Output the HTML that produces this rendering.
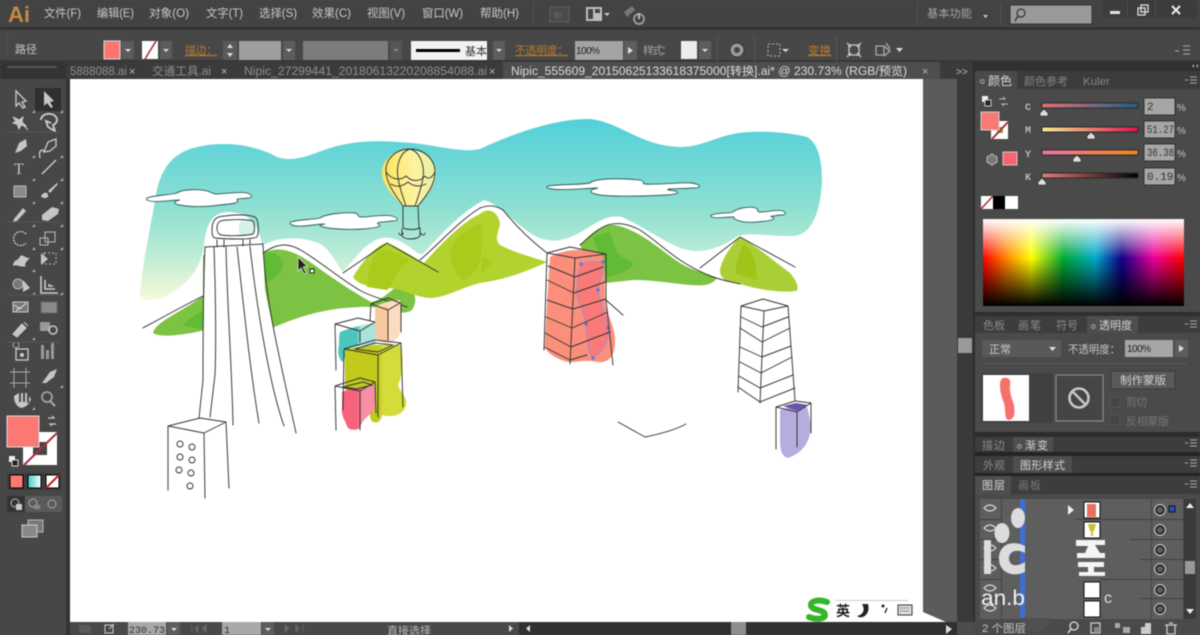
<!DOCTYPE html>
<html><head><meta charset="utf-8"><title>Illustrator</title>
<style>
html,body{margin:0;padding:0;background:#484848;width:1200px;height:635px;overflow:hidden}
svg{display:block;filter:blur(.45px)}
text{font-family:"Liberation Sans","Noto Sans CJK SC",sans-serif;font-size:11px;fill:#c4c4c4}
.m{font-size:11.5px;fill:#c8c8c8}
.o{fill:#b97a2c;font-size:11px;text-decoration:underline}
.d{fill:#8a8a8a}
.s{font-family:"Liberation Mono","Noto Sans CJK SC",monospace;font-size:11px;fill:#333}
.b{fill:none;stroke:#333;stroke-width:.95;stroke-linejoin:round;stroke-linecap:round}
.i{fill:#c6c6c6}
.c{fill:#fff;stroke:#2f5a58;stroke-width:.9}
</style></head><body>
<svg width="1200" height="635" viewBox="0 0 1200 635" xmlns="http://www.w3.org/2000/svg">
<defs>
<linearGradient id="sky" x1="0" y1="0" x2="0" y2="1"><stop offset="0" stop-color="#52d0da"/><stop offset=".5" stop-color="#8fe0d2"/><stop offset=".75" stop-color="#bdecd6"/><stop offset="1" stop-color="#f8fad8"/></linearGradient>
<linearGradient id="hue" x1="0" y1="0" x2="1" y2="0"><stop offset="0" stop-color="#f00"/><stop offset=".12" stop-color="#f80"/><stop offset=".24" stop-color="#ff0"/><stop offset=".4" stop-color="#0a3"/><stop offset=".56" stop-color="#0ac"/><stop offset=".69" stop-color="#108"/><stop offset=".85" stop-color="#e09"/><stop offset="1" stop-color="#f00"/></linearGradient>
<linearGradient id="wh" x1="0" y1="0" x2="0" y2="1"><stop offset="0" stop-color="#fff"/><stop offset=".45" stop-color="#fff" stop-opacity="0"/></linearGradient>
<linearGradient id="bk" x1="0" y1="0" x2="0" y2="1"><stop offset=".45" stop-color="#000" stop-opacity="0"/><stop offset="1" stop-color="#000"/></linearGradient>
<linearGradient id="tg" x1="0" y1="0" x2="1" y2="0"><stop offset="0" stop-color="#3fcfc5"/><stop offset="1" stop-color="#fff"/></linearGradient>
<linearGradient id="c1" x1="0" y1="0" x2="1" y2="0"><stop offset="0" stop-color="#e56f70"/><stop offset="1" stop-color="#1e5f8c"/></linearGradient>
<linearGradient id="c2" x1="0" y1="0" x2="1" y2="0"><stop offset="0" stop-color="#f4ef90"/><stop offset="1" stop-color="#e0104f"/></linearGradient>
<linearGradient id="c3" x1="0" y1="0" x2="1" y2="0"><stop offset="0" stop-color="#ee70b0"/><stop offset="1" stop-color="#ee8a10"/></linearGradient>
<linearGradient id="c4" x1="0" y1="0" x2="1" y2="0"><stop offset="0" stop-color="#e87a76"/><stop offset="1" stop-color="#000"/></linearGradient>
<linearGradient id="bal" x1="0" y1="0" x2="1" y2="0"><stop offset="0" stop-color="#fbe35c"/><stop offset=".6" stop-color="#fdf3a0"/><stop offset="1" stop-color="#e8f0a8"/></linearGradient>
<linearGradient id="pk" x1="0" y1="0" x2="1" y2="0"><stop offset=".45" stop-color="#f7637d"/><stop offset=".6" stop-color="#f78fa5"/></linearGradient>
<linearGradient id="yl" x1="0" y1="0" x2="1" y2="0"><stop offset=".55" stop-color="#c2ca1a"/><stop offset=".62" stop-color="#d4dc3c"/></linearGradient>
<linearGradient id="te" x1="0" y1="0" x2="1" y2="0"><stop offset=".5" stop-color="#4cc6bb"/><stop offset=".6" stop-color="#a8e4dc"/></linearGradient>
</defs>

<!-- base -->
<rect width="1200" height="635" fill="#484848"/>
<rect width="1200" height="27" fill="#434343"/>
<rect y="27" width="1200" height="3" fill="#333"/>
<rect y="30" width="1200" height="32" fill="#474747"/>
<rect y="60" width="1200" height="3" fill="#383838"/>
<rect y="62" width="975" height="17" fill="#3b3b3b"/>
<rect x="503" y="62" width="437" height="17" fill="#4e4e4e"/>
<rect x="0" y="62" width="66" height="17" fill="#333"/>
<rect x="0" y="79" width="66" height="556" fill="#474747"/>
<rect x="66" y="79" width="4" height="556" fill="#333"/>

<!-- menubar -->
<text x="8" y="22" style="font-size:22px;font-weight:bold;fill:#c58b3f">Ai</text>
<text class="m" x="44" y="17" textLength="37" lengthAdjust="spacingAndGlyphs">文件(F)</text>
<text class="m" x="97" y="17" textLength="37" lengthAdjust="spacingAndGlyphs">编辑(E)</text>
<text class="m" x="149" y="17" textLength="40" lengthAdjust="spacingAndGlyphs">对象(O)</text>
<text class="m" x="206" y="17" textLength="37" lengthAdjust="spacingAndGlyphs">文字(T)</text>
<text class="m" x="259" y="17" textLength="38" lengthAdjust="spacingAndGlyphs">选择(S)</text>
<text class="m" x="312" y="17" textLength="39" lengthAdjust="spacingAndGlyphs">效果(C)</text>
<text class="m" x="367" y="17" textLength="38" lengthAdjust="spacingAndGlyphs">视图(V)</text>
<text class="m" x="422" y="17" textLength="41" lengthAdjust="spacingAndGlyphs">窗口(W)</text>
<text class="m" x="480" y="17" textLength="39" lengthAdjust="spacingAndGlyphs">帮助(H)</text>
<rect x="533" y="3" width="1" height="21" fill="#555"/>
<rect x="550" y="7" width="19" height="15" fill="#4a4a4a" stroke="#5e5e5e"/>
<text x="554" y="18" style="font-size:8px;fill:#6e6e6e">Br</text>
<rect x="586" y="7" width="16" height="14" fill="#bdbdbd"/><rect x="588" y="9" width="5" height="10" fill="#444"/><rect x="595" y="9" width="5" height="4" fill="#444"/>
<path d="M604 13h6l-3 3z" fill="#ccc"/>
<path d="M624 12l8-6 3 4-8 7z" fill="#777"/>
<circle cx="639" cy="19" r="5" fill="none" stroke="#aaa" stroke-width="1.5"/><rect x="638" y="13" width="2" height="6" fill="#bbb"/>
<rect x="917" y="3" width="1" height="23" fill="#555"/>
<text class="d" x="927" y="17" textLength="45" lengthAdjust="spacingAndGlyphs" style="fill:#a6a6a6">基本功能</text>
<path d="M983 15h5l-2.500 3z" fill="#ccc"/>
<rect x="1000" y="3" width="1" height="23" fill="#555"/>
<rect x="1010" y="5" width="82" height="19" fill="#999" stroke="#333"/>
<circle cx="1021" cy="13" r="4" fill="none" stroke="#333" stroke-width="1.2"/><path d="M1018 16l-3 5" stroke="#333" stroke-width="1.4"/>
<rect x="1102" y="0" width="95" height="18" rx="2" fill="#3c3c3c"/>
<rect x="1127" y="0" width="1" height="18" fill="#4c4c4c"/><rect x="1155" y="0" width="1" height="18" fill="#4c4c4c"/>
<rect x="1110" y="11" width="10" height="3" fill="#e4e4e4"/>
<rect x="1138" y="8" width="7" height="7" fill="none" stroke="#ddd" stroke-width="1.3"/><rect x="1141" y="5" width="7" height="7" fill="none" stroke="#ddd" stroke-width="1.3"/>
<path d="M1172 6l8 8M1180 6l-8 8" stroke="#eee" stroke-width="2"/>

<!-- control bar -->
<path d="M7 34v24" stroke="#666" stroke-dasharray="1 2"/>
<text x="15" y="53" textLength="22" style="fill:#c6c6c6">路径</text>
<rect x="104" y="41" width="16" height="18" fill="#fb7670" stroke="#ddd"/>
<rect x="121" y="41" width="13" height="18" fill="#5b5b5b"/><path d="M125 49h6l-3 3z" fill="#ddd"/>
<rect x="142" y="41" width="16" height="18" fill="#fff"/><path d="M145 59l11-18" stroke="#a8303a" stroke-width="1.600"/>
<rect x="160" y="41" width="12" height="18" fill="#5b5b5b"/><path d="M163 49h6l-3 3z" fill="#ddd"/>
<text class="o" x="185" y="54" textLength="32" lengthAdjust="spacingAndGlyphs">描边：</text>
<rect x="223" y="41" width="14" height="19" fill="#5a5a5a"/><path d="M227 48l3-4 3 4zM227 53l3 4 3-4z" fill="#ddd"/>
<rect x="239" y="41" width="42" height="19" fill="#9e9e9e"/>
<rect x="283" y="41" width="12" height="19" fill="#5d5d5d"/><path d="M286 49h6l-3 3z" fill="#ddd"/>
<rect x="303" y="41" width="85" height="19" fill="#7c7c7c"/>
<rect x="390" y="41" width="12" height="19" fill="#555"/><path d="M393 49h6l-3 3z" fill="#888"/>
<rect x="411" y="41" width="76" height="19" fill="#f2f2f2"/>
<rect x="416" y="49" width="44" height="3" fill="#000"/>
<text x="465" y="55" textLength="22" style="fill:#333">基本</text>
<rect x="493" y="41" width="12" height="19" fill="#5d5d5d"/><path d="M496 49h6l-3 3z" fill="#ddd"/>
<text class="o" x="515" y="54" textLength="53" lengthAdjust="spacingAndGlyphs">不透明度：</text>
<rect x="575" y="41" width="48" height="19" fill="#a4a4a4"/>
<text x="576" y="54" textLength="24" style="fill:#222;font-size:10px">100%</text>
<rect x="624" y="41" width="13" height="19" fill="#5d5d5d"/><path d="M628 47l5 3.500-5 3.500z" fill="#ddd"/>
<text x="643" y="54" textLength="29" style="fill:#a6a6a6">样式：</text>
<rect x="681" y="41" width="16" height="18" fill="#ececec"/>
<rect x="699" y="41" width="12" height="18" fill="#5d5d5d"/><path d="M702 49h6l-3 3z" fill="#ddd"/>
<rect x="717" y="36" width="1" height="26" fill="#555"/>
<circle cx="737" cy="50" r="7" fill="#999" stroke="#333"/><circle cx="737" cy="50" r="3" fill="#444"/>
<rect x="754" y="36" width="1" height="26" fill="#555"/>
<rect x="768" y="44" width="12" height="12" fill="none" stroke="#bbb" stroke-dasharray="2 2"/><path d="M782 49h7l-3.500 3z" fill="#ddd"/>
<text x="808" y="54" textLength="23" lengthAdjust="spacingAndGlyphs" style="fill:#c47a30;text-decoration:underline">变换</text>
<rect x="836" y="36" width="1" height="26" fill="#555"/>
<path d="M849 45h10v10h-10zM847 43l4 4M861 43l-4 4M847 57l4-4M861 57l-4-4" fill="none" stroke="#ccc" stroke-width="1.300"/>
<path d="M876 46h8v9h-8zM884 46l6 5-6 5M886 43l4 6" fill="none" stroke="#aaa" stroke-width="1.300"/><path d="M896 48h7l-3.500 4z" fill="#ddd"/>
<path d="M1175 51h4M1183 46h7M1183 50h7M1183 54h7" stroke="#aaa"/>

<!-- tabs -->
<text x="70" y="75" textLength="57" lengthAdjust="spacingAndGlyphs" style="fill:#8f8f8f;font-size:11.500px">5888088.ai</text><text x="129" y="75" style="fill:#bbb">×</text>
<text x="152" y="75" textLength="59" lengthAdjust="spacingAndGlyphs" style="fill:#8f8f8f;font-size:11.500px">交通工具.ai</text><text x="221" y="75" style="fill:#bbb">×</text>
<text x="244" y="75" textLength="243" lengthAdjust="spacingAndGlyphs" style="fill:#8f8f8f;font-size:11.500px">Nipic_27299441_20180613220208854088.ai</text><text x="489" y="75" style="fill:#bbb">×</text>
<text x="511" y="75" textLength="396" lengthAdjust="spacingAndGlyphs" style="fill:#dcdcdc;font-size:11.500px">Nipic_555609_20150625133618375000[转换].ai* @ 230.73% (RGB/预览)</text><text x="922" y="75" style="fill:#bbb">×</text>
<text x="956" y="75" style="fill:#bbb;font-size:10px">&gt;&gt;</text>

<!-- pasteboard -->
<rect x="70" y="79" width="887" height="543" fill="#5b5b5b"/>
<rect x="957" y="79" width="16" height="543" fill="#3a3a3a"/>
<rect x="958" y="338" width="14" height="15" fill="#999"/>
<rect x="973" y="62" width="2" height="573" fill="#2e2e2e"/>

<!-- artboard -->
<path d="M70 79H923V612L946 622H70Z" fill="#fff"/>

<!-- sky -->
<path fill="url(#sky)" d="M140 295C142 265 150 230 156 195C160 170 172 155 190 149C215 141 250 142 277 157C295 163 312 154 330 148C360 139 385 141 413 143C440 146 462 153 480 149C510 135 555 118 590 119C620 122 640 146 680 147C705 147 720 133 750 132C775 131 795 134 807 137C818 143 822 160 822 180C821 205 815 233 795 236C775 237 750 232 738 236C725 245 710 252 693 251C675 250 650 230 622 217C605 213 590 228 577 234C560 243 545 243 530 233C515 223 500 205 484 200C462 212 445 230 423 254C418 256 410 245 397 240C385 235 375 238 362 250L343 272C335 262 330 248 318 243C300 236 280 237 265 244L262 244C258 225 250 212 228 212C212 212 206 225 204 245C200 270 190 282 165 297C155 301 140 302 140 295Z"/>
<rect x="239" y="221" width="15" height="14" rx="4" fill="#d5f1ea"/>

<!-- mountains -->
<path fill="#7cc243" d="M153 333C155 322 180 313 203 296L203 255L263 253C280 245 295 252 310 262C335 280 350 290 371 302C385 300 395 285 403 283C412 288 420 297 412 310C400 318 385 305 360 307C320 308 290 320 270 329L263 300L205 330C185 335 160 338 153 333Z"/>
<path fill="#62bb34" d="M263 253L273 253C280 256 284 262 283 266C280 274 272 280 265 283ZM183 325C190 318 197 314 203 310V330C195 328 188 327 183 325Z"/>
<path fill="#b2d22e" d="M353 277C360 265 375 245 387 243C398 247 410 255 424 263C440 245 462 222 480 214C490 205 500 215 500 225C497 235 495 240 500 245C515 253 535 258 547 262C530 270 505 280 480 283C460 288 445 298 430 298C415 297 405 290 390 288C372 288 358 285 353 277Z"/>
<path fill="#a8cb1c" d="M367 287C368 270 372 258 377 253C382 248 386 250 390 251C398 254 405 257 410 260C404 265 400 268 397 273C392 282 390 288 387 290ZM450 253C452 243 458 236 463 233C470 228 475 225 480 223C484 232 482 250 480 260C478 270 470 278 463 280C455 275 450 262 450 253ZM482 258C486 258 490 260 493 262C490 266 485 270 481 273Z"/>
<path fill="#7cc243" d="M580 245C590 235 600 224 615 225C640 230 660 250 680 263C695 272 710 274 717 278C712 285 705 286 690 285C670 283 650 280 637 280C625 280 615 283 600 283Z"/>
<path fill="#62bb34" d="M593 237C600 234 606 232 610 233C613 240 614 248 617 253C622 258 630 260 633 263C632 268 625 272 620 273C615 275 610 276 607 277Z"/>
<path fill="#aacf36" d="M720 270C722 258 733 243 740 237C755 245 770 258 790 273C796 280 800 288 796 291C780 293 760 290 740 284C728 282 720 280 720 270Z"/>
<path fill="#a0c418" d="M735 273C737 262 740 250 743 245C747 246 750 250 752 253C755 262 757 272 757 280C750 278 742 276 735 273Z"/>

<!-- tower -->
<path fill="#fff" d="M205 247L263 244L265 290L277 347L296 433L233 426L199 418L203 357Z"/>
<path class="b" d="M143 328C165 316 185 305 203 296M263 253C272 247 278 245 285 245C295 245 305 252 330 270C345 281 355 288 363 292C378 299 392 302 407 307"/>
<path class="b" d="M343 273L387 243L438 272M420 260C440 243 460 220 480 208C490 204 497 206 503 210C515 225 530 240 547 253"/>
<path class="b" d="M580 245C590 236 597 230 603 227C612 222 625 222 640 230C655 240 665 250 680 260C695 270 705 274 713 277C725 281 732 282 740 284M700 268L740 237L795 267"/>
<path class="b" d="M212 230C212 220 216 216 225 216C238 214 250 215 255 217C259 220 259 232 257 237C250 240 225 239 215 238C212 237 212 234 212 230Z"/>
<path class="b" d="M217 228C217 222 220 220 228 220C240 219 250 220 253 221C255 225 255 232 253 234C245 236 228 236 221 235C218 234 217 232 217 228Z"/>
<path class="b" d="M217 240V247M224 240V247M243 240V246M250 240V246M205 247L263 244"/>
<path class="b" d="M205 247C203 290 203 340 203 380L199 418M214 247C216 300 216 350 215 375L210 417M226 247C227 300 232 370 233 425M237 247C243 300 250 370 259 423M250 247C256 300 268 380 284 426M263 244C265 300 280 360 296 433"/>
<!-- small building -->
<path class="b" d="M168 426L200 418L226 422L204 433ZM168 426V490M204 433L205 498M226 422L229 488"/>
<g class="b"><circle cx="180" cy="444" r="3"/><circle cx="192" cy="447" r="3"/><circle cx="180" cy="457" r="3"/><circle cx="192" cy="460" r="3"/><circle cx="179" cy="470" r="3"/><circle cx="191" cy="473" r="3"/><circle cx="190" cy="486" r="3"/></g>

<!-- clouds -->
<path class="c" d="M147 198C155 195 170 195 177 193C182 189 200 189 207 191C212 192 212 194 216 194C225 194 240 191 247 193C253 195 253 198 248 198C243 199 236 198 237 200C240 203 232 204 220 205C205 207 190 207 180 205C172 204 174 201 180 200C170 200 158 203 150 201C146 200 146 199 147 198Z"/>
<path class="c" d="M291 222C300 219 312 220 320 218C325 214 345 212 355 213C360 214 356 217 362 217C370 217 385 214 392 216C399 218 399 221 392 221C385 222 375 222 378 224C384 226 376 228 363 229C350 230 335 229 328 228C318 226 318 225 325 224C315 224 305 227 296 226C290 225 289 223 291 222Z"/>
<path class="c" d="M548 186C560 184 580 185 590 183C595 178 620 178 640 180C647 182 640 184 646 184C660 185 680 182 692 183C702 185 702 188 692 188C683 189 665 188 668 190C680 191 682 194 667 195C650 196 615 197 600 195C588 193 588 190 598 188C585 188 565 191 552 189C546 188 546 187 548 186Z"/>
<path class="c" d="M712 215C718 212 728 214 733 212C737 208 750 206 756 208C760 210 755 212 761 212C768 212 778 209 783 211C787 213 786 215 780 215C775 216 768 216 772 217C778 219 770 221 757 222C745 223 738 221 735 219C732 218 736 217 733 217C725 217 716 219 712 217C710 216 711 215 712 215Z"/>

<!-- balloon -->
<path fill="url(#bal)" d="M408 150C392 150 381 162 382 174C383 188 398 200 403 206H418C425 198 436 186 436 172C436 160 424 150 408 150Z"/>
<g class="b">
<path d="M410 149C395 149 385 160 386 172C387 186 398 198 403 206H418C425 197 435 186 435 172C435 160 425 149 410 149Z"/>
<path d="M410 149C400 152 396 165 398 178C400 190 404 200 406 206M410 149C420 152 425 165 423 178C421 190 417 200 415 206"/>
<path d="M386 172C392 180 400 181 406 176C412 182 420 182 425 176C428 180 432 178 435 172M391 184C397 188 403 186 408 182C414 187 420 187 426 184"/>
<path d="M403 206L403 228M418 206L419 228M403 206H418M403 228C408 230 415 230 420 228M402 229V236C405 240 416 240 420 236V228M399 233A2 2 0 1 0 403 233M421 233A2 2 0 1 0 425 233"/>
</g>

<!-- coloured cluster -->
<path fill="#fcdcc0" d="M375 307C382 303 392 300 400 300C402 312 402 328 399 336C394 342 390 344 386 343C381 342 377 340 375 337Z"/>
<path fill="#f8c8a0" d="M375 307L388 306V342C381 342 377 340 375 337Z"/>
<path fill="url(#te)" d="M340 332C350 328 365 324 375 323C376 332 376 340 375 345C365 345 355 346 350 348C347 352 345 358 343 362C339 360 337 352 339 345C339 340 339 336 340 332Z"/>
<path fill="url(#yl)" d="M345 350C360 345 390 344 400 345C404 355 403 375 398 385C400 392 408 398 406 405C404 415 392 418 382 415C382 420 378 424 373 422C368 418 372 413 368 410C355 408 345 395 345 385Z"/>
<path fill="url(#pk)" d="M342 392C352 388 365 386 375 385C376 395 376 405 373 412C368 416 362 420 360 428C355 431 348 430 347 426C345 420 341 416 342 408Z"/>
<g class="b">
<path d="M371 304L388 298L400 303L388 310ZM371 304L370 320M388 310V340M401 303V332"/>
<path d="M335 324L358 318L375 322L360 331ZM335 324L336 370M360 331V342"/>
<path d="M344 349L375 340L401 343L378 355ZM355 349L375 343L393 345L378 352ZM344 349L343 410M378 355V417M401 343L403 407"/>
<path d="M335 386L360 378L375 382L360 391ZM343 387L363 382L372 385L357 389ZM335 386L336 430M360 391V430M375 382L376 413"/>
</g>

<!-- red building -->
<path fill="#fb8f7c" d="M550 257C560 250 590 246 603 255C606 275 604 295 606 307C610 320 618 335 614 350C612 360 605 363 597 362C585 359 575 363 568 362C560 360 548 355 545 347C546 320 548 285 550 257Z"/>
<path fill="#fa7a78" stroke="#8d8fe0" stroke-width=".8" d="M581 264C590 260 597 262 603 262C604 272 599 282 598 290C600 302 606 315 608 328C609 338 606 350 593 358C588 354 588 345 586 324C583 310 578 300 577 295C577 284 578 272 581 264Z"/>
<g fill="#6a70d8"><circle cx="581" cy="264" r="1.700"/><circle cx="603" cy="262" r="1.700"/><circle cx="598" cy="290" r="1.700"/><circle cx="608" cy="328" r="1.700"/><circle cx="593" cy="358" r="1.700"/><circle cx="586" cy="324" r="1.700"/></g>
<g class="b">
<path d="M547 253L570 247L606 254L575 258ZM547 253L544 350M575 258L570 364M606 254V300L613 365M606 300L623 315M544 347L570 360L587 355"/>
<path d="M548 266L575 277L603 267M547 280L574 293L605 282M547 300L573 309L606 299M546 317L572 328L608 312M545 333L571 347L610 332"/>
</g>

<!-- grey building -->
<g class="b">
<path d="M741 306L763 299L788 306L764 311ZM741 306L738 392M764 311L760 403M788 306L795 400"/>
<path d="M741 317L762 327L788 317M740 328L762 342L790 328M740 347L762 357L791 346M740 362L761 373L792 357M739 376L760 388L793 375M738 387L760 402L795 388"/>
<path d="M618 422L645 437C660 434 675 430 686 424"/>
</g>
<!-- purple -->
<path fill="#b6acde" d="M780 410C790 407 800 406 807 407C811 420 812 432 808 440C804 450 795 456 787 458C781 455 780 448 780 440Z"/>
<path fill="#6a55a8" d="M783 406L796 403L808 405L797 411Z"/>
<path class="b" d="M776 407L795 401L811 403L797 412ZM776 407L776 449M797 412V447M811 403V433"/>

<!-- cursor -->
<path d="M298 257L298 271L301 268L304 274L306 273L303 267L307 266Z" fill="#222" stroke="#fff" stroke-width=".6"/>
<rect x="310" y="269" width="4" height="4" fill="#fff" stroke="#222"/>

<!-- IME -->
<rect x="835" y="600" width="73" height="1" fill="#ccc"/>
<path d="M827 602C818 599 811 601 811 605C811 611 825 609 825 615C825 619 816 620 809 617" fill="none" stroke="#35b52a" stroke-width="6" stroke-linecap="round"/>
<text x="836" y="616" style="font-size:14px;font-weight:bold;fill:#222">英</text>
<path d="M862 604C866 611 862 615 857 616C861 620 871 615 868 604Z" fill="#222"/>
<circle cx="883" cy="606" r="1.500" fill="#222"/><path d="M887 608L885 613" stroke="#222" stroke-width="1.300"/>
<rect x="898" y="605" width="14" height="10" fill="#ddd" stroke="#334"/><path d="M900 608h10M900 611h10" stroke="#445" stroke-dasharray="1 1"/>

<!-- status bar -->
<rect x="70" y="622" width="905" height="13" fill="#494949"/>
<rect x="79" y="625" width="12" height="8" rx="1" fill="#5a5a5a"/>
<path d="M105 625h8v8h-8zM109 629l5-5" fill="none" stroke="#ccc"/>
<rect x="128" y="622" width="38" height="13" fill="#a8a8a8"/><text class="s" x="129" y="633" textLength="36" lengthAdjust="spacingAndGlyphs" style="font-size:10px">230.73</text>
<rect x="167" y="622" width="13" height="13" fill="#5d5d5d"/><path d="M171 628h6l-3 3z" fill="#ddd"/>
<path d="M192 625v7M195 628.500l3-3v7zM206 625l-4 3.500 4 3.500z" fill="#666" stroke="#666"/>
<rect x="222" y="622" width="39" height="13" fill="#a8a8a8"/><text class="s" x="224" y="633" style="font-size:10px">1</text>
<rect x="262" y="622" width="12" height="13" fill="#5d5d5d"/><path d="M265 628h6l-3 3z" fill="#ddd"/>
<path d="M285 625l4 3.500-4 3.500zM296 625l3 3.500-3 3.500zM303 625v7" fill="#666" stroke="#666"/>
<text x="387" y="634" textLength="44" lengthAdjust="spacingAndGlyphs" style="fill:#bbb;font-size:10.500px">直接选择</text>
<path d="M509 625l4 3.500-4 3.500z" fill="#ddd"/>
<rect x="519" y="622" width="438" height="13" fill="#303030"/>
<path d="M530 625l-4 3.500 4 3.500z" fill="#ddd"/>
<rect x="731" y="622" width="15" height="13" fill="#8e8e8e"/>
<path d="M946 625l6 4-6 5z" fill="#ddd"/>
<rect x="957" y="622" width="16" height="13" fill="#4c4c4c"/>

<!-- toolbar -->
<rect x="7" y="66" width="50" height="2" fill="#555"/>
<rect x="35" y="88" width="26" height="23" fill="#2f2f2f"/>
<g class="i">
<path d="M16 91L16 106L19 103L23 108L25 107L22 102L26 101Z" fill="none" stroke="#ccc" stroke-width="1.300"/>
<path d="M44 91L44 106L47 103L51 108L53 107L50 102L54 101Z"/>
<path d="M13 117l6 3 4-3-1 5 4 4-5-1-2 4-2-5-4-1 3-2zM22 124l6 6" stroke="#ccc"/>
<path d="M41 120a8 6 0 1 1 12 5l2 6-7-4-2-6 5 2" fill="none" stroke="#ccc" stroke-width="1.800"/>
<path d="M15 153L19 143L26 139L27 146L21 151Z"/>
<path d="M44 152L48 142L56 139L56 146L50 151ZM40 158C38 150 43 148 44 152" fill="none" stroke="#ccc" stroke-width="1.300"/>
<text x="14" y="174" style="font-family:'Liberation Serif',serif;font-size:16px;fill:#c6c6c6">T</text>
<path d="M42 174L56 160" stroke="#ccc" stroke-width="1.400"/>
<rect x="14" y="186" width="12" height="11" fill="#8a8a8a" stroke="#bbb"/>
<path d="M41 196C45 190 49 193 48 197C45 199 42 198 41 196ZM48 191L57 183L58 184L50 193Z"/>
<path d="M14 219L23 208L26 211L17 221L13 222Z"/>
<path d="M42 215L52 207L59 209L58 214L48 221L42 220Z"/>
<path d="M26 234A7 7 0 1 0 26 243" fill="none" stroke="#ccc" stroke-width="1.300" stroke-dasharray="2 1"/>
<path d="M40 238h8v7h-8zM45 232h10v10h-10z" fill="none" stroke="#bbb"/>
<path d="M13 266C14 258 18 262 20 256C24 254 24 258 30 258C26 262 24 264 26 266C20 268 18 264 13 266Z"/>
<path d="M41 253L48 259L41 265Z"/><rect x="44" y="253" width="12" height="11" fill="none" stroke="#bbb" stroke-dasharray="2 2"/>
<circle cx="18" cy="284" r="5" fill="#777" stroke="#bbb"/><path d="M23 280L23 292L30 288Z"/>
<path d="M41 276V293H58M45 280V289H55M49 284V286H53" fill="none" stroke="#ccc" stroke-width="1.600"/>
<rect x="13" y="302" width="15" height="10" fill="#777" stroke="#ccc"/><path d="M14 305l6 4 6-6M16 311l4-4" stroke="#ddd" fill="none"/>
<rect x="41" y="302" width="16" height="11" fill="#8a8a8a" stroke="#666"/>
<path d="M13 334L22 324L26 328L17 337ZM24 322L28 326" stroke="#ccc"/>
<rect x="40" y="322" width="10" height="9" fill="#999"/><circle cx="53" cy="330" r="4" fill="none" stroke="#ccc" stroke-width="1.400"/>
<circle cx="16" cy="345" r="3" fill="none" stroke="#aaa"/><rect x="16" y="349" width="12" height="11" fill="none" stroke="#ccc" stroke-width="1.300"/><circle cx="22" cy="355" r="2" fill="#ccc"/>
<rect x="41" y="345" width="3" height="14" fill="#999"/><rect x="46" y="350" width="3" height="9" fill="#999"/><rect x="51" y="343" width="3" height="16" fill="#999"/>
<path d="M14 372h12v11h-12zM10 372h20M10 383h20M14 368v20M26 368v20" fill="none" stroke="#aaa"/>
<path d="M42 383L50 372L57 369L54 377L46 383Z"/>
<path d="M14 396L19 393V402H21V393H23V402H25V393H27V403H29V396L31 399C29 405 26 407 21 408C16 406 14 402 14 396Z"/>
<circle cx="47" cy="397" r="5" fill="none" stroke="#aaa" stroke-width="1.600"/><path d="M50 401L55 406" stroke="#aaa" stroke-width="2"/>
</g>
<g fill="#bbb"><path d="M32 113l3-3v3zM60 113l3-3v3zM32 158l3-3v3zM60 158l3-3v3zM32 181l3-3v3zM60 181l3-3v3zM32 204l3-3v3zM60 204l3-3v3zM32 227l3-3v3zM60 227l3-3v3zM32 250l3-3v3zM60 250l3-3v3zM32 272l3-3v3zM32 295l3-3v3zM60 295l3-3v3zM32 340l3-3v3zM60 388l3-3v3zM32 410l3-3v3z"/></g>
<g stroke="#555"><path d="M6 132h54M6 222h54M6 295h54M6 342h54"/></g>

<!-- fill / stroke -->
<rect x="23" y="432" width="34" height="33" fill="#fff"/>
<rect x="33" y="442" width="14" height="13" fill="#444"/>
<path d="M24 465L57 433" stroke="#a8303a" stroke-width="2"/>
<rect x="7" y="416" width="32" height="31" fill="#fb7875" stroke="#ddd"/>
<path d="M48 418l6 0-2-2M56 424l-6 0 2 2" fill="none" stroke="#ccc" stroke-width="1.200"/>
<rect x="9" y="456" width="6" height="6" fill="#eee"/><rect x="12" y="460" width="6" height="6" fill="#222" stroke="#ddd"/>
<rect x="7" y="473" width="54" height="17" fill="#3c3c3c"/>
<rect x="10" y="475" width="13" height="13" fill="#fb7875" stroke="#000"/>
<rect x="28" y="475" width="13" height="13" fill="url(#tg)" stroke="#000"/>
<rect x="46" y="475" width="13" height="13" fill="#fff" stroke="#000"/><path d="M46 488L59 475" stroke="#c4202a" stroke-width="2"/>
<rect x="7" y="496" width="18" height="16" fill="#333"/><rect x="25" y="496" width="18" height="16" fill="#5a5a5a"/><rect x="43" y="496" width="19" height="16" fill="#5a5a5a"/>
<circle cx="15" cy="503" r="4" fill="none" stroke="#bbb"/><rect x="16" y="504" width="6" height="6" fill="#ccc"/>
<circle cx="33" cy="503" r="4" fill="none" stroke="#aaa"/><rect x="34" y="505" width="6" height="4" fill="#888"/>
<circle cx="52" cy="504" r="4" fill="none" stroke="#aaa"/>
<rect x="28" y="520" width="15" height="12" fill="#777" stroke="#bbb"/><rect x="22" y="525" width="15" height="12" fill="#888" stroke="#ccc"/>

<!-- right panels -->
<rect x="975" y="62" width="225" height="573" fill="#4a4a4a"/>
<rect x="975" y="62" width="225" height="9" fill="#303030"/>
<rect x="975" y="71" width="225" height="18" fill="#3c3c3c"/>
<rect x="975" y="71" width="42" height="18" fill="#4a4a4a"/>
<path d="M1192 66l2 -2v4zM1196 66l2 -2v4" fill="#aaa"/>
<text x="979" y="84" style="font-size:8px;fill:#ccc">≎</text>
<text x="988" y="85" textLength="24" style="fill:#d8d8d8;font-size:12px">颜色</text>
<text x="1024" y="85" textLength="44" lengthAdjust="spacingAndGlyphs" style="fill:#868686">颜色参考</text>
<text x="1083" y="85" textLength="27" lengthAdjust="spacingAndGlyphs" style="fill:#868686">Kuler</text>
<path d="M1185 80h3M1190 77h7M1190 80h7M1190 83h7" stroke="#aaa"/>

<rect x="982" y="96" width="6" height="6" fill="#eee"/><rect x="985" y="100" width="6" height="6" fill="#222" stroke="#ccc"/>
<path d="M999 99l6 0-2-2M1008 104l-6 0 2 2" fill="none" stroke="#bbb"/>
<rect x="991" y="121" width="17" height="18" fill="#fff"/><rect x="997" y="127" width="6" height="6" fill="#993"/>
<path d="M992 139L1008 122" stroke="#a8303a" stroke-width="2"/>
<rect x="981" y="112" width="18" height="18" fill="#fb7875" stroke="#ccc"/>
<path d="M992 154l5 3v5l-5 3-5-3v-5z" fill="#777" stroke="#bbb"/>
<rect x="1003" y="152" width="14" height="13" fill="#fa6470" stroke="#ccc"/>

<text x="1025" y="110" style="font-family:'Liberation Mono';font-weight:bold;fill:#bbb;font-size:10px">C</text>
<text x="1025" y="133" style="font-family:'Liberation Mono';font-weight:bold;fill:#bbb;font-size:10px">M</text>
<text x="1025" y="157" style="font-family:'Liberation Mono';font-weight:bold;fill:#bbb;font-size:10px">Y</text>
<text x="1025" y="180" style="font-family:'Liberation Mono';font-weight:bold;fill:#bbb;font-size:10px">K</text>
<rect x="1042" y="103" width="96" height="5" fill="url(#c1)" stroke="#2a2a2a"/>
<rect x="1042" y="127" width="96" height="5" fill="url(#c2)" stroke="#2a2a2a"/>
<rect x="1042" y="150" width="96" height="5" fill="url(#c3)" stroke="#2a2a2a"/>
<rect x="1042" y="173" width="96" height="5" fill="url(#c4)" stroke="#2a2a2a"/>
<path d="M1044 109l4 4v3h-8v-3zM1091 132l4 4v3h-8v-3zM1077 155l4 4v3h-8v-3zM1042 178l4 4v3h-8v-3z" fill="#ddd" stroke="#222" stroke-width=".6"/>
<g fill="#a6a6a6" stroke="#333"><rect x="1144" y="98" width="31" height="17"/><rect x="1144" y="121" width="31" height="17"/><rect x="1144" y="144" width="31" height="17"/><rect x="1144" y="168" width="31" height="17"/></g>
<text class="s" x="1147" y="110">2</text><text class="s" x="1147" y="133" textLength="27" lengthAdjust="spacingAndGlyphs">51.27</text><text class="s" x="1147" y="156" textLength="27" lengthAdjust="spacingAndGlyphs">36.38</text><text class="s" x="1147" y="180">0.19</text>
<text x="1177" y="111" style="font-size:10px">%</text><text x="1177" y="134" style="font-size:10px">%</text><text x="1177" y="157" style="font-size:10px">%</text><text x="1177" y="181" style="font-size:10px">%</text>
<rect x="981" y="196" width="12" height="13" fill="#fff"/><path d="M981 209L993 196" stroke="#b02a30" stroke-width="1.500"/>
<rect x="993" y="196" width="12" height="13" fill="#000"/><rect x="1005" y="196" width="13" height="13" fill="#fff"/>
<rect x="983" y="219" width="201" height="87" fill="url(#hue)"/>
<rect x="983" y="219" width="201" height="87" fill="url(#wh)"/>
<rect x="983" y="219" width="201" height="87" fill="url(#bk)"/>
<rect x="983" y="219" width="201" height="1" fill="#eee"/>

<!-- transparency -->
<rect x="975" y="312" width="225" height="4" fill="#2f2f2f"/>
<rect x="975" y="316" width="225" height="17" fill="#3d3d3d"/>
<rect x="1087" y="316" width="51" height="17" fill="#4e4e4e"/>
<text x="983" y="329" textLength="22" style="fill:#8a8a8a">色板</text>
<text x="1018" y="329" textLength="23" style="fill:#8a8a8a">画笔</text>
<text x="1056" y="329" textLength="22" style="fill:#8a8a8a">符号</text>
<text x="1090" y="329" style="font-size:8px;fill:#ccc">≎</text>
<text x="1099" y="329" textLength="33" style="fill:#d6d6d6">透明度</text>
<path d="M1185 324h3M1190 321h7M1190 324h7M1190 327h7" stroke="#aaa"/>
<rect x="982" y="340" width="79" height="17" fill="#595959"/>
<text x="989" y="353" textLength="22" style="fill:#ccc">正常</text>
<path d="M1049 347h7l-3.500 4z" fill="#ddd"/>
<text x="1068" y="353" textLength="52" lengthAdjust="spacingAndGlyphs" style="fill:#c6c6c6">不透明度：</text>
<rect x="1125" y="340" width="48" height="17" fill="#a6a6a6"/>
<text x="1127" y="352" textLength="24" style="fill:#222;font-size:10px">100%</text>
<rect x="1175" y="340" width="13" height="17" fill="#5d5d5d"/><path d="M1179 345l5 3.500-5 3.500z" fill="#ddd"/>
<rect x="982" y="363" width="205" height="1" fill="#5a5a5a"/>
<rect x="981" y="373" width="72" height="50" fill="#404040"/>
<rect x="983" y="375" width="46" height="46" fill="#fff"/>
<path d="M1003 378C1009 377 1011 380 1010 385C1009 392 1012 398 1014 405C1015 412 1015 419 1009 420C1004 420 1006 410 1004 403C1001 396 1000 390 1000 385C1000 381 1001 379 1003 378Z" fill="#f8706e"/>
<rect x="1056" y="375" width="47" height="46" fill="#454545" stroke="#8a8a8a" stroke-width="1.200"/>
<circle cx="1079" cy="398" r="9.500" fill="none" stroke="#c8c8c8" stroke-width="2.600"/><path d="M1072 391L1086 405" stroke="#c8c8c8" stroke-width="2.600"/>
<rect x="1111" y="371" width="64" height="18" fill="#5a5a5a" stroke="#3a3a3a"/>
<text x="1120" y="384" textLength="46" lengthAdjust="spacingAndGlyphs" style="fill:#d0d0d0">制作蒙版</text>
<rect x="1110" y="397" width="10" height="10" fill="#444" stroke="#555"/><rect x="1110" y="415" width="10" height="10" fill="#444" stroke="#555"/>
<text x="1126" y="406" textLength="21" style="fill:#757575">剪切</text>
<text x="1126" y="425" textLength="43" style="fill:#757575">反相蒙版</text>

<rect x="975" y="432" width="225" height="5" fill="#2c2c2c"/>
<rect x="975" y="437" width="225" height="15" fill="#3d3d3d"/>
<rect x="1013" y="437" width="40" height="15" fill="#4e4e4e"/>
<text x="982" y="449" textLength="23" style="fill:#8a8a8a">描边</text>
<text x="1016" y="449" style="font-size:8px;fill:#ccc">≎</text>
<text x="1025" y="449" textLength="23" style="fill:#d6d6d6">渐变</text>
<path d="M1185 443h3M1190 440h7M1190 443h7M1190 446h7" stroke="#aaa"/>
<rect x="975" y="452" width="225" height="4" fill="#242424"/>
<rect x="975" y="456" width="225" height="17" fill="#3d3d3d"/>
<rect x="1013" y="456" width="59" height="17" fill="#4e4e4e"/>
<text x="983" y="469" textLength="22" style="fill:#8a8a8a">外观</text>
<text x="1020" y="469" textLength="45" style="fill:#d6d6d6">图形样式</text>
<path d="M1185 463h3M1190 460h7M1190 463h7M1190 466h7" stroke="#aaa"/>
<rect x="975" y="473" width="225" height="3" fill="#242424"/>
<rect x="975" y="476" width="225" height="18" fill="#3d3d3d"/>
<rect x="975" y="476" width="36" height="18" fill="#4e4e4e"/>
<text x="982" y="489" textLength="23" style="fill:#d6d6d6">图层</text>
<text x="1018" y="489" textLength="23" style="fill:#777">画板</text>
<path d="M1185 484h3M1190 481h7M1190 484h7M1190 487h7" stroke="#aaa"/>

<!-- layers -->
<rect x="980" y="499" width="203" height="120" fill="#5e5e5e"/>
<rect x="1001" y="499" width="1" height="120" fill="#444"/>
<rect x="1151" y="499" width="1" height="120" fill="#444"/>
<g fill="#3f3f3f"><rect x="980" y="519" width="22" height="1"/><rect x="980" y="539" width="22" height="1"/><rect x="980" y="559" width="22" height="1"/><rect x="980" y="579" width="22" height="1"/><rect x="980" y="598" width="22" height="1"/>
<rect x="1075" y="519" width="108" height="1"/><rect x="1130" y="539" width="53" height="1"/><rect x="1140" y="559" width="43" height="1"/><rect x="1100" y="579" width="83" height="1"/><rect x="1140" y="598" width="43" height="1"/></g>
<rect x="1020" y="499" width="5" height="120" fill="#3c70d8"/>
<g fill="none" stroke="#ddd" stroke-width="1.200"><path d="M984 508q6-6 12 0q-6 6-12 0Z"/><path d="M984 528q6-6 12 0q-6 6-12 0Z"/><path d="M984 548q6-6 12 0q-6 6-12 0Z"/><path d="M984 568q6-6 12 0q-6 6-12 0Z"/><path d="M984 588q6-6 12 0q-6 6-12 0Z"/><path d="M984 608q6-6 12 0q-6 6-12 0Z"/></g>
<path d="M1068 505l6 5-6 5z" fill="#eee"/>
<g fill="#fff" stroke="#111"><rect x="1084" y="502" width="16" height="16"/><rect x="1084" y="522" width="16" height="16"/><rect x="1084" y="582" width="16" height="16"/><rect x="1084" y="601" width="16" height="16"/></g>
<rect x="1087" y="504" width="9" height="13" fill="#e8705e"/>
<path d="M1088 524h8l-2 7h-4zM1091 531h2v5h-2z" fill="#c8c030"/>
<g fill="none" stroke="#1c1c1c" stroke-width="1.300"><circle cx="1160" cy="510" r="3.800"/><circle cx="1160" cy="530" r="3.800"/><circle cx="1160" cy="550" r="3.800"/><circle cx="1160" cy="569" r="3.800"/><circle cx="1160" cy="590" r="3.800"/><circle cx="1160" cy="609" r="3.800"/></g>
<g fill="none" stroke="#ddd" stroke-width=".8"><circle cx="1160" cy="510" r="5.500"/><circle cx="1160" cy="530" r="5.500"/><circle cx="1160" cy="550" r="5.500"/><circle cx="1160" cy="569" r="5.500"/><circle cx="1160" cy="590" r="5.500"/><circle cx="1160" cy="609" r="5.500"/></g>
<rect x="1169" y="506" width="6" height="6" fill="#2450c8" stroke="#111"/>
<rect x="1184" y="499" width="12" height="120" fill="#3a3a3a"/>
<path d="M1186 508h8l-4-5zM1186 609h8l-4 5z" fill="#eee"/>
<rect x="1185" y="561" width="10" height="13" fill="#999"/>

<!-- watermark -->
<ellipse cx="1018" cy="518" rx="7" ry="10" fill="#dcdcdc"/>
<ellipse cx="1002" cy="533" rx="7.500" ry="10" fill="#dcdcdc"/>
<rect x="984" y="540" width="7" height="34" fill="#dcdcdc"/>
<path d="M1025 546C1008 538 998 548 999 560C1000 572 1012 578 1025 572V562C1015 568 1009 565 1009 558C1009 552 1016 548 1025 553Z" fill="#dcdcdc"/>
<path d="M1076 540H1105V545H1095L1100 553H1105V558H1077V553H1085L1088 546H1076ZM1078 562H1104V567H1094V572H1105V576H1079V572H1088V567H1078Z" fill="#f4f4f4"/>
<text x="981" y="605" textLength="44" lengthAdjust="spacingAndGlyphs" style="font-size:21px;fill:#f2f2f2">an.b</text>
<text x="1104" y="603" style="font-size:16px;fill:#dedede">c</text>
<path d="M1020 618H1050C1050 628 1040 632 1034 632C1028 632 1022 626 1020 618Z" fill="#505050"/>

<!-- bottom of layers -->
<text x="982" y="632" textLength="44" lengthAdjust="spacingAndGlyphs" style="fill:#c6c6c6">2 个图层</text>
<circle cx="1074" cy="626" r="4" fill="none" stroke="#ddd" stroke-width="1.300"/><path d="M1071 629l-3 4" stroke="#ddd" stroke-width="1.500"/>
<rect x="1091" y="623" width="9" height="10" fill="none" stroke="#ccc" stroke-width="1.300"/><rect x="1094" y="627" width="6" height="6" fill="#888"/>
<path d="M1115 623h5v5h-5zM1123 627h7v6h-7z" fill="#aaa"/>
<path d="M1141 623h10v11h-10z" fill="#ccc"/><path d="M1141 623h4v4h-4z" fill="#4a4a4a"/>
<path d="M1165 625h12M1167 625v9h8v-9M1169 623h4" fill="none" stroke="#ccc" stroke-width="1.300"/>
</svg>
</body></html>
